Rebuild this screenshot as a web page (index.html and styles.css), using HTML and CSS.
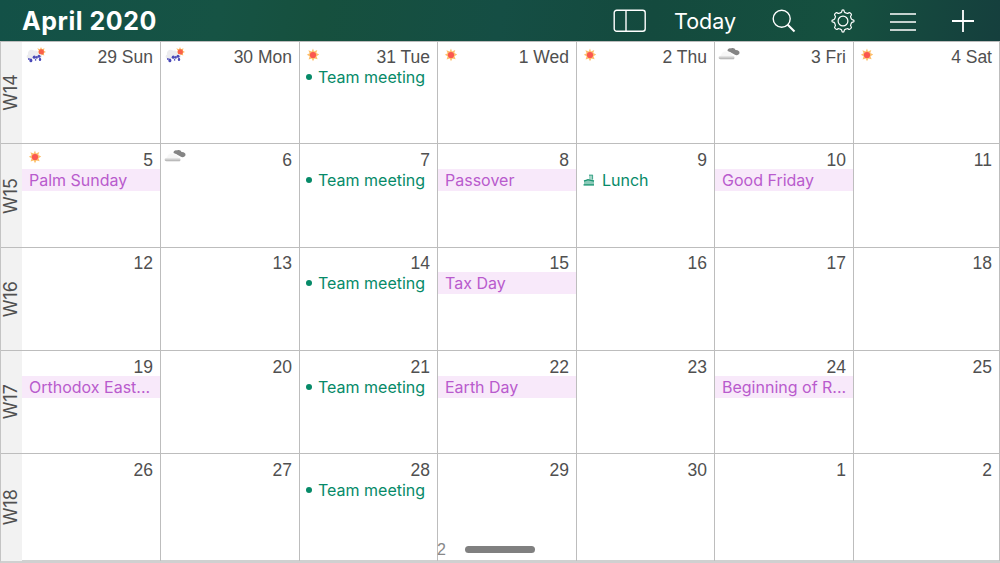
FILE: index.html
```html
<!doctype html>
<html lang="en">
    <head>
        <title>April 2020</title>
        <meta charset="utf-8">
        <meta name="viewport" content="width=device-width, initial-scale=1">
        <link rel="stylesheet" href="styles.css">
    </head>

    <body>
        <svg class="symbols">
            <symbol id="sun" viewBox="0 0 14 14">
                <path d="M7 0.6L8 3.4L11.3 2L10.3 5L13.2 6.6L10.5 8.2L11.6 11.3L8.4 10.4L7 13.2L5.7 10.4L2.6 11.5L3.6 8.3L0.8 6.8L3.6 5.3L2.4 2.2L5.7 3.5Z" fill="#fdbf6c"/>
                <circle cx="7" cy="7" r="3.1" fill="#fb5750"/>
            </symbol>
            <symbol id="rain" viewBox="0 0 20 16">
                <path d="M15 0L16 2.2L18.5 1.2L17.8 3.7L20 5L17.7 6L18.3 8.6L15.4 7.5L11 6L13 4L11.3 1.3L14 2.3Z" fill="#fdb960"/>
                <circle cx="15.3" cy="4.9" r="2.6" fill="#f9604a"/>
                <path d="M3.5 12C0 12 0 8.1 2 7.4C1.4 4 5 1.5 8.3 3.7C11 3 12.8 5 13 7C17 6.8 16.8 11 14 11Z" fill="#ececef"/>
                <g fill="#4a49b8">
                    <circle cx="8.3" cy="10.2" r="1.6"/>
                    <circle cx="13" cy="9.2" r="1.5"/>
                    <ellipse cx="4.9" cy="13.4" rx="1.5" ry="1.9"/>
                    <ellipse cx="10.8" cy="10.4" rx="1" ry="1.4"/>
                    <ellipse cx="14" cy="12.4" rx="1.2" ry="1.6"/>
                    <circle cx="9.6" cy="12.9" r=".8"/>
                    <circle cx="2.9" cy="12" r=".9"/>
                </g>
            </symbol>
            <symbol id="cloud" viewBox="0 0 22 14">
                <linearGradient id="shade" x2="0" y2="1">
                    <stop offset=".5" stop-color="#f7f7f7"/>
                    <stop offset="1" stop-color="#aaa"/>
                </linearGradient>
                <path d="M9.5 4C9.5 2 11.2 .8 13 1.5C15 .5 17 1.5 17.5 3C20 2.8 21.8 4.2 21.5 6C21 8.2 18.5 8.7 16.5 7.6L12 5Z" fill="#858585"/>
                <path d="M2.5 12.3C0 12.3 0 8.8 3 8.6C3.5 5 7.5 3.5 10 5.5C12.5 4.7 14 6.4 14 8.5C17 8.3 17.4 12.3 15 12.3Z" fill="url(#shade)"/>
            </symbol>
        </svg>

        <header>
            <h1>April 2020</h1>
            <nav>
                <svg class="panels" viewBox="0 0 34 24"><rect x="1.2" y="1.2" width="31" height="21" rx="2.5"/><path d="M13 1v21"/></svg>
                <a class="today">Today</a>
                <svg class="search" viewBox="0 0 24 24"><circle cx="9.7" cy="9.7" r="8.5"/><path d="M15.7 15.7L22.5 22.5" stroke-width="2"/></svg>
                <svg class="gear" viewBox="0 0 24 24"><path d="M9.9 3.6Q10.8 3.3 10.8 2.2Q10.8 .9 12 .9T13.2 2.2Q13.2 3.3 14.1 3.6L15.8 4.3Q16.7 4.7 17.4 4Q18.4 3 19.7 4.3T20 6.6Q19.3 7.3 19.7 8.2L20.4 9.9Q20.7 10.8 21.8 10.8Q23.1 10.8 23.1 12T21.8 13.2Q20.7 13.2 20.4 14.1L19.7 15.8Q19.3 16.7 20 17.4Q21 18.4 19.7 19.7T17.4 20Q16.7 19.3 15.8 19.7L14.1 20.4Q13.2 20.7 13.2 21.8Q13.2 23.1 12 23.1T10.8 21.8Q10.8 20.7 9.9 20.4L8.2 19.7Q7.3 19.3 6.6 20Q5.6 21 4.3 19.7T4 17.4Q4.7 16.7 4.3 15.8L3.6 14.1Q3.3 13.2 2.2 13.2Q.9 13.2 .9 12T2.2 10.8Q3.3 10.8 3.6 9.9L4.3 8.2Q4.7 7.3 4 6.6Q3 5.6 4.3 4.3T6.6 4Q7.3 4.7 8.2 4.3Z"/><circle cx="12" cy="12" r="4.9"/></svg>
                <svg class="lines" viewBox="0 0 26 20"><path d="M0 2h26M0 10h26M0 18h26"/></svg>
                <svg class="plus" viewBox="0 0 22 22"><path d="M0 11h22M11 0v22"/></svg>
            </nav>
        </header>

        <main>
            <div class="week"><span>W14</span></div>
            <div class="day high"><svg class="rain"><use href="#rain"/></svg><p class="date">29 Sun</p></div>
            <div class="day high"><svg class="rain"><use href="#rain"/></svg><p class="date">30 Mon</p></div>
            <div class="day high"><svg class="sun"><use href="#sun"/></svg><p class="date">31 Tue</p><p class="event"><i class="dot"></i>Team meeting</p></div>
            <div class="day high"><svg class="sun"><use href="#sun"/></svg><p class="date">1 Wed</p></div>
            <div class="day high"><svg class="sun"><use href="#sun"/></svg><p class="date">2 Thu</p></div>
            <div class="day high"><svg class="cloud"><use href="#cloud"/></svg><p class="date">3 Fri</p></div>
            <div class="day high"><svg class="sun"><use href="#sun"/></svg><p class="date">4 Sat</p></div>

            <div class="week"><span>W15</span></div>
            <div class="day"><svg class="sun"><use href="#sun"/></svg><p class="date">5</p><p class="holiday">Palm Sunday</p></div>
            <div class="day"><svg class="cloud"><use href="#cloud"/></svg><p class="date">6</p></div>
            <div class="day"><p class="date">7</p><p class="event"><i class="dot"></i>Team meeting</p></div>
            <div class="day"><p class="date">8</p><p class="holiday">Passover</p></div>
            <div class="day"><p class="date">9</p><p class="event"><svg class="meal" viewBox="0 0 12 12"><path d="M6 .8h3.8v5H6z" fill="#a5d4c7"/><path d="M6 1.2h3.8M9.6 1v4.5" fill="none" stroke="#3fa68a"/><path d="M1 6h10v5.4H1z" fill="#8ccab9"/><path d="M1 7.2L5 5.6L11 7.2M.5 10.8H11" fill="none" stroke="#1c9573" stroke-width="1.3"/></svg>Lunch</p></div>
            <div class="day"><p class="date">10</p><p class="holiday">Good Friday</p></div>
            <div class="day"><p class="date">11</p></div>

            <div class="week"><span>W16</span></div>
            <div class="day high"><p class="date">12</p></div>
            <div class="day high"><p class="date">13</p></div>
            <div class="day high"><p class="date">14</p><p class="event"><i class="dot"></i>Team meeting</p></div>
            <div class="day high"><p class="date">15</p><p class="holiday">Tax Day</p></div>
            <div class="day high"><p class="date">16</p></div>
            <div class="day high"><p class="date">17</p></div>
            <div class="day high"><p class="date">18</p></div>

            <div class="week"><span>W17</span></div>
            <div class="day"><p class="date">19</p><p class="holiday">Orthodox East...</p></div>
            <div class="day"><p class="date">20</p></div>
            <div class="day"><p class="date">21</p><p class="event"><i class="dot"></i>Team meeting</p></div>
            <div class="day"><p class="date">22</p><p class="holiday">Earth Day</p></div>
            <div class="day"><p class="date">23</p></div>
            <div class="day"><p class="date">24</p><p class="holiday">Beginning of R...</p></div>
            <div class="day"><p class="date">25</p></div>

            <div class="week"><span>W18</span></div>
            <div class="day"><p class="date">26</p></div>
            <div class="day"><p class="date">27</p></div>
            <div class="day"><p class="date">28</p><p class="event"><i class="dot"></i>Team meeting</p></div>
            <div class="day"><p class="date">29</p></div>
            <div class="day"><p class="date">30</p></div>
            <div class="day"><p class="date">1</p></div>
            <div class="day"><p class="date">2</p></div>
        </main>

        <span class="page">2</span>
        <div class="handle"></div>
    </body>
</html>
```
FILE: styles.css
```css
* {
    box-sizing: border-box;
}

body {
    position: relative;
    margin: 0;
    height: 563px;
    overflow: hidden;
    background: #fff;
    color: #505050;
    font-family: Inter, "Liberation Sans", sans-serif;
}

p {
    margin: 0;
}

.symbols {
    position: absolute;
    width: 0;
    height: 0;
}

header {
    display: flex;
    justify-content: space-between;
    align-items: center;
    height: 41px;
    padding: 0 26px 0 22px;
    background: linear-gradient(100deg, #135147 0%, #165344 22%, #16503e 32%, #154e44 50%, #144a3e 65%, #15503f 84%, #15463e 93%, #153f3d 100%);
    color: #fff;
}

header h1 {
    margin: 0;
    font-size: 25px;
    font-weight: 700;
    line-height: 42px;
    letter-spacing: 0.55px;
}

nav {
    display: flex;
    align-items: center;
}

nav svg {
    fill: none;
    stroke: #fff;
    stroke-width: 1.4;
}

.panels {
    width: 34px;
    height: 24px;
}

.today {
    width: 62px;
    margin: 0 36px 0 27px;
    font-size: 21.5px;
    line-height: 42px;
    white-space: nowrap;
}

.search {
    width: 24px;
    height: 24px;
    margin: 1px 35px 0 0;
}

.gear {
    width: 24px;
    height: 24px;
    margin: 1px 35px 0 0;
    stroke-width: 1.2;
}

.lines {
    width: 26px;
    height: 20px;
    margin: 2px 36px 0 0;
}

.plus {
    width: 22px;
    height: 22px;
    margin-top: 1px;
    stroke-width: 1.8;
}

main {
    display: grid;
    grid-template-columns: 21px 139px 139px 138px 139px 138px 139px 146px;
    grid-template-rows: 102px 104px 103px 103px 107px;
    height: 522px;
    border-top: 1px solid #bdbdbd;
    border-left: 1px solid #c4c4c4;
    border-bottom: 3px solid #d0d0d0;
}

.week {
    display: flex;
    justify-content: center;
    align-items: center;
    padding-right: 2px;
    background: #f2f2f2;
    border-bottom: 1px solid #bdbdbd;
}

.week span {
    writing-mode: vertical-rl;
    transform: rotate(180deg);
    font-size: 18px;
    line-height: 20px;
}

.day {
    position: relative;
    min-width: 0;
    padding-top: 5px;
    border-right: 1px solid #bdbdbd;
    border-bottom: 1px solid #bdbdbd;
}

.day.high {
    padding-top: 4px;
}

.week:nth-child(n+33),
.day:nth-child(n+33) {
    border-bottom: 0;
}

.date {
    height: 20px;
    padding-right: 7px;
    font-family: "Liberation Sans", Arial, sans-serif;
    font-size: 17.5px;
    line-height: 23px;
    text-align: right;
}

.event,
.holiday {
    height: 22px;
    font-size: 16px;
    line-height: 23px;
    white-space: nowrap;
}

.event {
    display: flex;
    align-items: center;
    padding-left: 6px;
    color: #068a68;
}

.holiday {
    padding-left: 7px;
    background: #f8e9fa;
    color: #b95bcd;
}

.dot {
    width: 6px;
    height: 6px;
    margin-right: 6px;
    border-radius: 50%;
    background: #068a68;
}

.meal {
    width: 12px;
    height: 12px;
    margin-right: 7px;
}

/* weather sits over the top left corner of a day */
.sun,
.rain,
.cloud {
    position: absolute;
    top: 6px;
    left: 6px;
    width: 14px;
    height: 14px;
}

.rain {
    top: 5px;
    left: 4px;
    width: 20px;
    height: 16px;
}

.cloud {
    top: 5px;
    left: 3px;
    width: 22px;
    height: 14px;
}

.page {
    position: absolute;
    left: 437px;
    top: 540px;
    color: #888;
    font-family: "Liberation Sans", Arial, sans-serif;
    font-size: 16px;
    line-height: 20px;
}

.handle {
    position: absolute;
    left: 465px;
    top: 546px;
    width: 70px;
    height: 7px;
    border-radius: 4px;
    background: #808080;
}
```
